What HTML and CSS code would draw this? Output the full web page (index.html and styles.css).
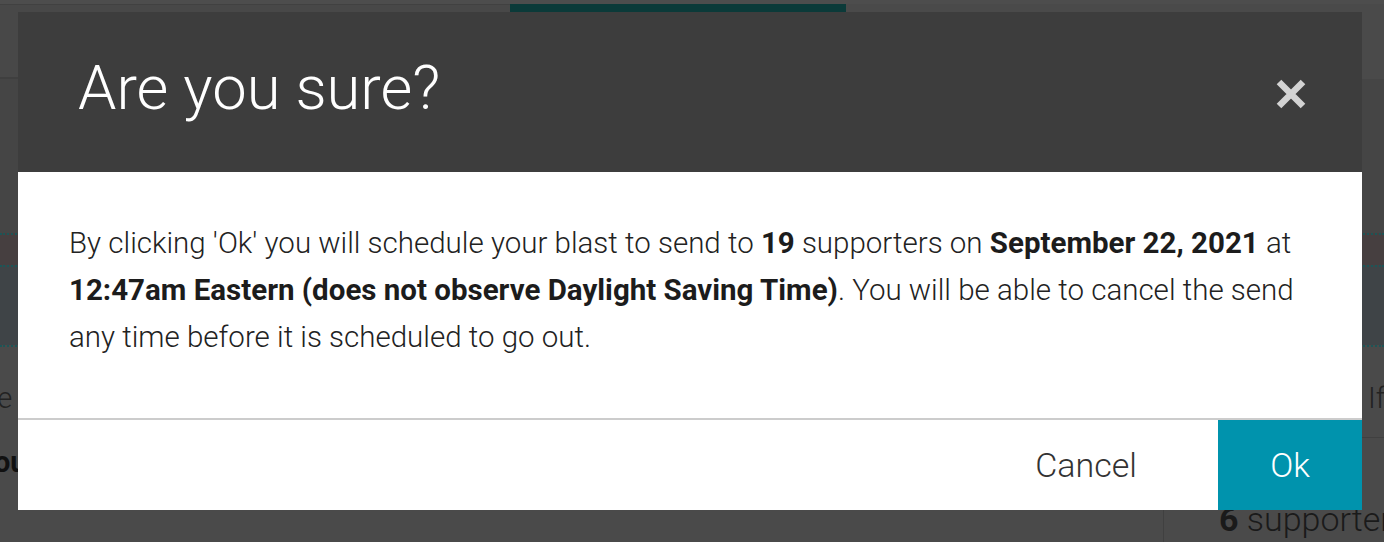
FILE: index.html
```html
<!DOCTYPE html>
<html lang="en">
<head>
<meta charset="utf-8">
<title>Are you sure?</title>
<link rel="stylesheet" href="styles.css">
</head>
<body>
<div class="page">
  <div class="bar-top"></div>
  <div class="nav">
    <div class="nav-left"></div>
    <div class="nav-tab"></div>
    <div class="nav-right"></div>
  </div>
  <div class="section"></div>
  <div class="band band-a"></div>
  <div class="band band-b"></div>
  <div class="content">
    <div class="main">
      <p class="main-text">the</p>
      <p class="main-bold">Group</p>
    </div>
    <div class="aside">
      <p class="aside-if">If</p>
      <p class="aside-count"><b>6</b> supporters</p>
    </div>
  </div>

  <div class="modal" role="dialog" aria-labelledby="modal-title">
    <div class="modal-header">
      <h2 id="modal-title" class="modal-title">Are you sure?</h2>
      <button class="modal-close" aria-label="Close">
        <svg width="32" height="32" viewBox="0 0 32 32" aria-hidden="true">
          <path d="M4 4 L28 28 M28 4 L4 28" stroke="#d3d3d3" stroke-width="6.5" fill="none"/>
        </svg>
      </button>
    </div>
    <div class="modal-body">
      <p>By clicking 'Ok' you will schedule your blast to send to <b>19</b> supporters on <b>September 22, 2021</b> at <b>12:47am Eastern (does not observe Daylight Saving Time)</b>. You will be able to cancel the send any time before it is scheduled to go out.</p>
    </div>
    <div class="modal-footer">
      <button class="btn-cancel">Cancel</button>
      <button class="btn-ok">Ok</button>
    </div>
  </div>
</div>
</body>
</html>
```

FILE: styles.css
```css
* { box-sizing: border-box; }
html, body { margin: 0; padding: 0; }
body {
  background: #4a4a4a;
  font-family: Roboto, "Liberation Sans", Arial, sans-serif;
}
.page {
  position: relative;
  width: 1384px;
  height: 542px;
  overflow: hidden;
  background: #4a4a4a;
}
.bar-top { height: 4px; background: #4d4d4d; }
.nav { display: flex; height: 75px; }
.nav-left {
  width: 510px;
  background: #484848;
  border-top: 1px solid #414141;
  border-bottom: 2px solid #3f3f3f;
}
.nav-tab { width: 336px; height: 8px; background: #0b3a39; }
.nav-right { flex: 1; background: #4a4a4a; }
.section { height: 154px; background: #454545; }
.band { border-top: 2px dotted #1d5556; }
.band-a { height: 32px; background: #463f40; }
.band-b { height: 80px; background: #3f4447; }
.content {
  display: flex;
  border-top: 2px dotted #1d5556;
  height: 200px;
}
.main { flex: 1; }
.main-text {
  margin: 34px 0 0 -28px;
  font-size: 29px;
  font-weight: 300;
  color: #222;
}
.main-bold {
  margin: 30px 0 0 -36px;
  font-size: 29px;
  font-weight: 700;
  color: #111;
}
.aside { width: 221px; border-left: 1px solid #404040; }
.aside-if {
  margin: 0 0 0 -1px;
  padding: 34px 0 22px 205px;
  font-size: 29px;
  font-weight: 300;
  color: #222;
  border-bottom: 1px solid #404040;
}
.aside-count {
  margin: 61px 0 0 55px;
  font-size: 34px;
  font-weight: 300;
  color: #1a1a1a;
  white-space: nowrap;
}
.aside-count b { font-weight: 700; }

/* modal */
.modal {
  position: absolute;
  top: 12px;
  left: 18px;
  width: 1344px;
  background: #fff;
}
.modal-header {
  height: 160px;
  background: #3d3d3d;
  display: flex;
  align-items: flex-start;
  justify-content: space-between;
  padding: 40px 55px 0 60px;
}
.modal-title {
  margin: 0;
  font-size: 61.5px;
  font-weight: 300;
  color: #fff;
  line-height: 72px;
}
.modal-close {
  margin-top: 26px;
  width: 32px;
  height: 32px;
  padding: 0;
  border: 0;
  background: none;
  display: block;
}
.modal-close svg { display: block; }
.modal-body {
  padding: 48px 50px 57px 51px;
}
.modal-body p {
  margin: 0;
  font-size: 29.5px;
  line-height: 47px;
  color: #222;
  font-weight: 300;
}
.modal-body b { font-weight: 700; color: #1c1c1c; }
.modal-footer {
  display: flex;
  justify-content: flex-end;
  align-items: stretch;
  height: 92px;
  border-top: 2px solid #cccccc;
}
.btn-cancel {
  border: 0;
  background: none;
  font-family: inherit;
  font-size: 34px;
  font-weight: 300;
  color: #333;
  padding: 0;
  margin-right: 81px;
}
.btn-ok {
  width: 144px;
  border: 0;
  background: #0093ad;
  color: #fff;
  font-family: inherit;
  font-size: 34px;
  font-weight: 300;
  padding: 0;
}
```
